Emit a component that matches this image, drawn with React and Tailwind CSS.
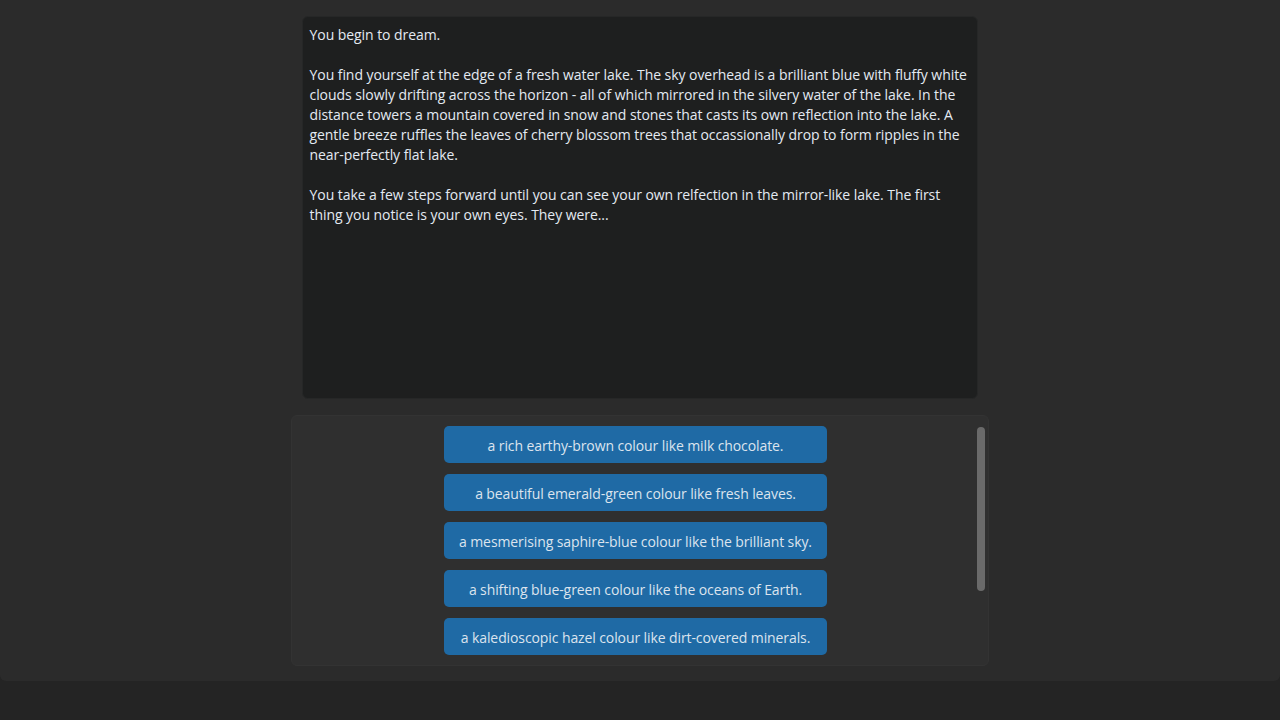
const story = [
  ['You begin to dream.'],
  [],
  [
    'You find yourself at the edge of a fresh water lake. The sky overhead is a brilliant blue with fluffy white',
    'clouds slowly drifting across the horizon - all of which mirrored in the silvery water of the lake. In the',
    'distance towers a mountain covered in snow and stones that casts its own reflection into the lake. A',
    'gentle breeze ruffles the leaves of cherry blossom trees that occassionally drop to form ripples in the',
    'near-perfectly flat lake.',
  ],
  [],
  [
    'You take a few steps forward until you can see your own relfection in the mirror-like lake. The first',
    'thing you notice is your own eyes. They were...',
  ],
]

const choices = [
  'a rich earthy-brown colour like milk chocolate.',
  'a beautiful emerald-green colour like fresh leaves.',
  'a mesmerising saphire-blue colour like the brilliant sky.',
  'a shifting blue-green colour like the oceans of Earth.',
  'a kaledioscopic hazel colour like dirt-covered minerals.',
]

export default function App() {
  return (
    <div
      className="w-[1280px] h-[720px] bg-[#242424] overflow-hidden"
      style={{ fontFamily: '"Open Sans", "Noto Sans", sans-serif' }}
    >
      <div className="h-[681px] bg-[#2b2b2b] rounded-b-md flex flex-col items-center pt-4">
        {/* story textbox */}
        <div className="w-[676px] h-[383px] ml-[-1px] bg-[#1e1f1f] rounded-md border border-[#262727] px-[7px] pt-[8px] text-[14px] leading-[20px] text-[#e4eaf2]">
          {story.flatMap((para, i) =>
            para.length === 0
              ? [<div key={'b' + i} className="h-5" />]
              : para.map((line, j) => (
                  <div key={i + '-' + j} className="whitespace-nowrap tracking-[-0.06px]">
                    {line}
                  </div>
                ))
          )}
        </div>

        {/* choices panel */}
        <div className="mt-4 w-[698px] h-[251px] bg-[#2f2f2f] rounded-md border border-[#333333] flex pt-[10px] pr-[3px]">
          <div className="flex-1 flex flex-col items-center gap-[11px] pl-[2px]">
            {choices.map((c) => (
              <button
                key={c}
                className="w-[383px] h-[37px] pt-[2px] rounded-[5px] bg-[#1f6aa5] text-[#dce4ee] text-[14px] tracking-[-0.1px]"
              >
                {c}
              </button>
            ))}
          </div>
          <div className="w-[8px] h-[164px] mt-[1px] rounded-full bg-[#6a6a6a]" />
        </div>
      </div>
    </div>
  )
}
